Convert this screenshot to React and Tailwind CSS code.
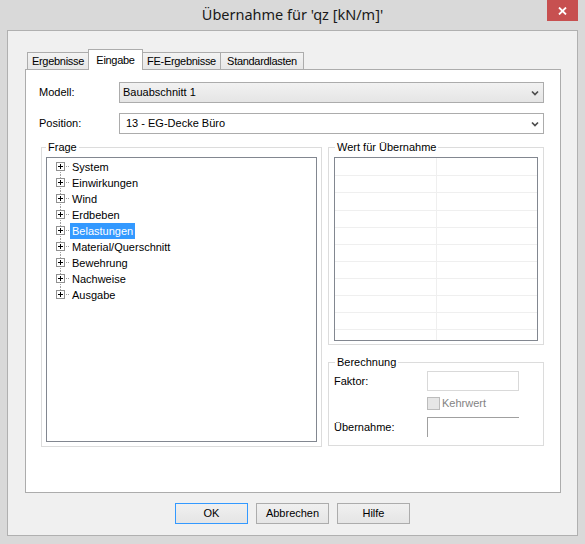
import React from "react";

const items = [
  "System",
  "Einwirkungen",
  "Wind",
  "Erdbeben",
  "Belastungen",
  "Material/Querschnitt",
  "Bewehrung",
  "Nachweise",
  "Ausgabe",
];

function TreeRow({ label, first, last, selected }) {
  const dots = [];
  if (!first) {
    dots.push([8, 0], [8, 2]);
  }
  if (!last) {
    dots.push([8, 13], [8, 15]);
  }
  dots.push([14, 7], [16, 7]);
  return (
    <div className="flex h-[16px] items-center pl-[5px]">
      <svg width="18" height="16" className="shrink-0" shapeRendering="crispEdges">
        {dots.map(([x, y], i) => (
          <rect key={i} x={x} y={y} width="1" height="1" fill="#a0a0a0" />
        ))}
        <rect x="4.5" y="3.5" width="8" height="8" fill="#ffffff" stroke="#919191" />
        <path d="M6 7.5H11M8.5 5V10" stroke="#000000" />
      </svg>
      <span
        className={
          selected
            ? "bg-[#3399ff] text-white px-[2px] leading-[16px]"
            : "px-[2px] leading-[16px]"
        }
      >
        {label}
      </span>
    </div>
  );
}

function Chevron() {
  return (
    <svg width="8" height="6" className="shrink-0">
      <path d="M1 1.5L4 4.5L7 1.5" stroke="#4d4d4d" strokeWidth="1.7" fill="none" />
    </svg>
  );
}

const gridRows = [18, 17, 18, 17, 17, 17, 17, 17, 17, 17];

export default function App() {
  return (
    <div className="w-[585px] h-[544px] bg-[#d9d9d9] flex flex-col font-['Liberation_Sans',Arial,sans-serif] text-[11px] text-black select-none">
      {/* Title bar */}
      <div className="h-[30px] flex shrink-0">
        <div className="flex-1 flex items-center justify-center pl-[38px] pb-[1px] font-['Noto_Sans',sans-serif] text-[14.5px] text-[#1a1a1a]">
          Übernahme für 'qz [kN/m]'
        </div>
        <div className="w-[31px] h-[21px] mr-[7px] bg-[#c75050] flex items-center justify-center">
          <svg width="9" height="8">
            <path d="M1 0.5L8 7.5M8 0.5L1 7.5" stroke="#ffffff" strokeWidth="1.8" />
          </svg>
        </div>
      </div>

      {/* Client area */}
      <div className="flex-1 mx-[7px] mb-[8px] border border-[#b0b0b0] bg-[#f0f0f0] flex flex-col">
        {/* Tabs */}
        <div className="mt-[18px] ml-[19px] h-[20px] flex items-end tracking-[-0.3px]">
          <div className="w-[62px] h-[17px] border border-b-0 border-[#acacac] bg-linear-to-b from-[#f3f3f3] to-[#e7e7e7] flex items-center justify-center">
            Ergebnisse
          </div>
          <div className="w-[55px] h-[21px] -ml-px -mb-px border border-b-0 border-[#acacac] bg-white flex items-start justify-center pt-[2px] relative z-10">
            Eingabe
          </div>
          <div className="w-[79px] h-[17px] -ml-px border border-b-0 border-[#acacac] bg-linear-to-b from-[#f3f3f3] to-[#e7e7e7] flex items-center justify-center">
            FE-Ergebnisse
          </div>
          <div className="w-[84px] h-[17px] -ml-px border border-b-0 border-[#acacac] bg-linear-to-b from-[#f3f3f3] to-[#e7e7e7] flex items-center justify-center">
            Standardlasten
          </div>
        </div>

        {/* Panel */}
        <div className="ml-[17px] mr-[16px] h-[424px] border border-[#acacac] bg-white pt-[12px] pl-[13px] pr-[16px] flex flex-col">
          <div className="flex items-center h-[21px]">
            <div className="w-[80px]">Modell:</div>
            <div className="flex-1 h-[21px] border border-[#acacac] bg-linear-to-b from-[#f2f2f2] to-[#e5e5e5] flex items-center pl-[3px] pr-[4px]">
              <span className="flex-1">Bauabschnitt 1</span>
              <Chevron />
            </div>
          </div>
          <div className="flex items-center h-[21px] mt-[10px]">
            <div className="w-[80px]">Position:</div>
            <div className="flex-1 h-[21px] border border-[#acacac] bg-white flex items-center pl-[6px] pr-[4px]">
              <span className="flex-1">13 - EG-Decke Büro</span>
              <Chevron />
            </div>
          </div>

          <div className="flex mt-[7px] ml-[2px] gap-[6px]">
            {/* Frage */}
            <fieldset className="w-[281px] border border-[#dcdcdc] pl-[4px] pr-[4px] pt-[3px] pb-[4px]">
              <legend className="px-[2px] leading-[13px]">Frage</legend>
              <div className="h-[285px] border border-[#828790] bg-white pt-[1px]">
                {items.map((it, i) => (
                  <TreeRow
                    key={it}
                    label={it}
                    first={i === 0}
                    last={i === items.length - 1}
                    selected={it === "Belastungen"}
                  />
                ))}
              </div>
            </fieldset>

            {/* Right column */}
            <div className="w-[216px] flex flex-col">
              <fieldset className="border border-[#dcdcdc] pl-[5px] pr-[5px] pt-[3px] pb-[3px]">
                <legend className="ml-[1px] px-[2px] leading-[13px]">Wert für Übernahme</legend>
                <div className="h-[184px] border border-[#828790] bg-white flex flex-col overflow-hidden">
                  {gridRows.map((h, i) => (
                    <div
                      key={i}
                      className={
                        (h === 18 ? "h-[18px]" : "h-[17px]") +
                        " shrink-0 flex border-b border-[#efefef]"
                      }
                    >
                      <div className="w-[102px] border-r border-[#efefef]" />
                      <div className="flex-1" />
                    </div>
                  ))}
                  <div className="flex-1 flex">
                    <div className="w-[102px] border-r border-[#efefef]" />
                    <div className="flex-1" />
                  </div>
                </div>
              </fieldset>

              <fieldset className="mt-[11px] border border-[#dcdcdc] pl-[5px] pr-[5px] pt-[2px] pb-[8px]">
                <legend className="ml-[1px] px-[2px] leading-[13px]">Berechnung</legend>
                <div className="flex items-center h-[20px]">
                  <div className="w-[93px]">Faktor:</div>
                  <div className="w-[92px] h-[20px] border border-[#d9d9d9] bg-white" />
                </div>
                <div className="flex items-center h-[13px] mt-[6px] pl-[93px]">
                  <div className="w-[13px] h-[13px] border border-[#bcbcbc] bg-[#e6e6e6]" />
                  <span className="ml-[2px] text-[#838383]">Kehrwert</span>
                </div>
                <div className="flex items-center h-[20px] mt-[7px]">
                  <div className="w-[93px]">Übernahme:</div>
                  <div className="w-[92px] h-[20px] border-t border-l border-[#a0a0a0]" />
                </div>
              </fieldset>
            </div>
          </div>
        </div>

        {/* Buttons */}
        <div className="mt-[10px] flex justify-center gap-[8px]">
          <div className="w-[73px] h-[21px] border border-[#3399ff] bg-linear-to-b from-[#f0f0f0] to-[#e5e5e5] flex items-center justify-center">
            OK
          </div>
          <div className="w-[73px] h-[21px] border border-[#acacac] bg-linear-to-b from-[#f0f0f0] to-[#e5e5e5] flex items-center justify-center">
            Abbrechen
          </div>
          <div className="w-[73px] h-[21px] border border-[#acacac] bg-linear-to-b from-[#f0f0f0] to-[#e5e5e5] flex items-center justify-center">
            Hilfe
          </div>
        </div>
      </div>
    </div>
  );
}
